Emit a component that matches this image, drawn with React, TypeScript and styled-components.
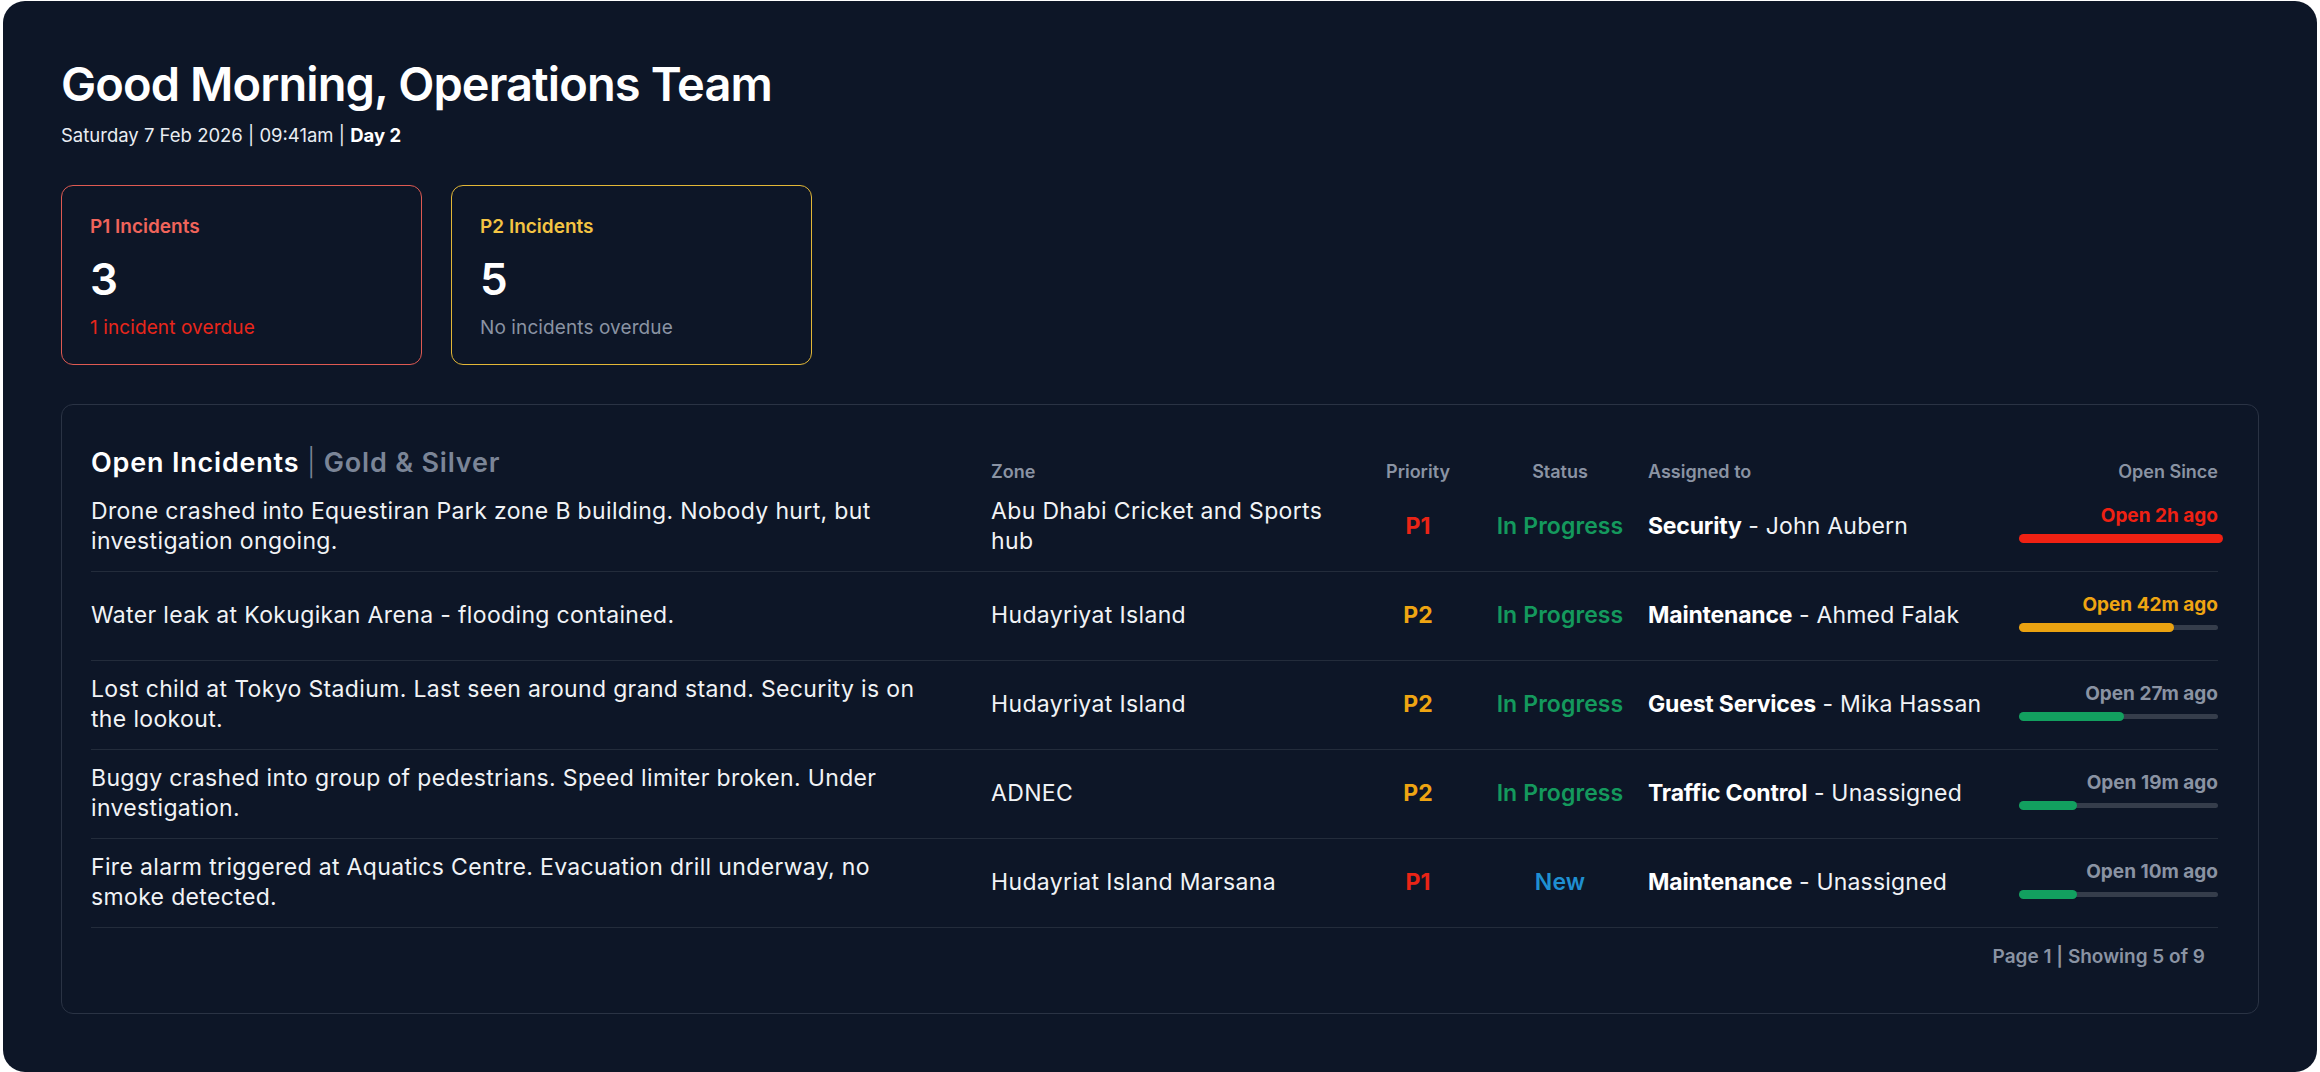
import styled, { createGlobalStyle } from "styled-components";

const GlobalStyle = createGlobalStyle`
  html, body {
    margin: 0;
    padding: 0;
    background: #ffffff;
  }
  body {
    font-family: Inter, "Noto Sans", "Liberation Sans", sans-serif;
    -webkit-font-smoothing: antialiased;
  }
  * {
    box-sizing: border-box;
  }
`;

const Page = styled.div`
  padding: 1px 3px 2px 3px;
`;

const Board = styled.main`
  background: #0d1627;
  border-radius: 22px;
  min-height: 1069px;
  padding: 55px 58px 58px 58px;
  color: #f3f5f8;
`;

const Title = styled.h1`
  margin: 0;
  font-size: 47px;
  line-height: 1.2;
  font-weight: 600;
  letter-spacing: -0.9px;
  color: #ffffff;
`;

const Subtitle = styled.p`
  margin: 11px 0 0;
  font-size: 18.5px;
  line-height: 1.3;
  font-weight: 400;
  color: #e9edf2;

  strong {
    font-weight: 700;
    color: #ffffff;
  }
`;

const Summary = styled.section`
  display: flex;
  gap: 29px;
  margin-top: 38px;
`;

const StatCard = styled.div<{ $accent: string }>`
  width: 361px;
  height: 180px;
  border: 1.5px solid ${(p) => p.$accent};
  border-radius: 12px;
  padding: 29px 28px 0 28px;
  display: flex;
  flex-direction: column;
`;

const StatLabel = styled.div<{ $color: string }>`
  font-size: 19px;
  line-height: 1.3;
  font-weight: 600;
  color: ${(p) => p.$color};
`;

const StatValue = styled.div`
  margin-top: 13px;
  font-size: 44px;
  line-height: 1.2;
  font-weight: 600;
  color: #ffffff;
`;

const StatNote = styled.div<{ $color: string }>`
  margin-top: 10px;
  font-size: 19px;
  line-height: 1.3;
  letter-spacing: 0.1px;
  color: ${(p) => p.$color};
`;

const Panel = styled.section`
  margin-top: 39px;
  border: 1px solid #2a3344;
  border-radius: 12px;
  padding: 42px 40px 43px 29px;
`;

const columns = "900px 370px 114px 170px 1fr 199px";

const HeadRow = styled.div`
  display: grid;
  grid-template-columns: ${columns};
  align-items: end;
  padding-bottom: 3px;
`;

const PanelTitle = styled.h2`
  margin: 0;
  font-size: 27px;
  line-height: 1.2;
  font-weight: 600;
  letter-spacing: 0.8px;
  color: #ffffff;

  span {
    color: #7b8597;
  }
  i {
    font-style: normal;
    font-weight: 300;
    color: #7b8597;
  }
`;

const HeadCell = styled.div<{ $align?: "left" | "center" | "right"; $indent?: boolean }>`
  font-size: 18px;
  line-height: 1.3;
  font-weight: 600;
  color: #8a93a3;
  margin-bottom: -4px;
  text-align: ${(p) => p.$align ?? "left"};
  padding-left: ${(p) => (p.$indent ? "3px" : "0")};
`;

const Row = styled.div`
  display: grid;
  grid-template-columns: ${columns};
  align-items: center;
  height: 89px;
  border-bottom: 1px solid #232c3b;
  font-size: 23px;
  line-height: 1.29;
  letter-spacing: 0.35px;
  color: #f1f3f6;
`;

const Desc = styled.div`
  padding-right: 60px;
`;

const Zone = styled.div`
  padding-right: 20px;
`;

const priorityColors: Record<string, string> = {
  P1: "#ea2416",
  P2: "#efa512",
};

const Priority = styled.div<{ $level: string }>`
  text-align: center;
  font-weight: 700;
  letter-spacing: 0;
  color: ${(p) => priorityColors[p.$level]};
`;

const statusColors: Record<string, string> = {
  "In Progress": "#14995d",
  New: "#1f8fd1",
};

const Status = styled.div<{ $status: string }>`
  text-align: center;
  font-weight: 600;
  letter-spacing: 0.1px;
  color: ${(p) => statusColors[p.$status]};
`;

const Assigned = styled.div`
  padding-left: 3px;
  white-space: nowrap;
  letter-spacing: 0.2px;

  b {
    font-weight: 700;
    letter-spacing: -0.2px;
    color: #ffffff;
  }
`;

const OpenSince = styled.div`
  display: flex;
  flex-direction: column;
  align-items: stretch;
  gap: 7px;
  margin-top: -8px;
  letter-spacing: 0;
`;

const OpenLabel = styled.div<{ $color: string }>`
  text-align: right;
  font-size: 19px;
  line-height: 1.3;
  font-weight: 700;
  color: ${(p) => p.$color};
`;

const Track = styled.div`
  height: 5px;
  border-radius: 3px;
  background: #353d4b;
  display: flex;
  align-items: center;
`;

const Fill = styled.div<{ $color: string }>`
  flex: none;
  height: 9px;
  border-radius: 5px;
  background: ${(p) => p.$color};
`;

const Footer = styled.div`
  margin-top: 17px;
  padding-right: 13px;
  text-align: right;
  font-size: 19px;
  line-height: 1.3;
  font-weight: 600;
  color: #8a93a3;
`;

type Incident = {
  desc: string;
  zone: string;
  priority: "P1" | "P2";
  status: "In Progress" | "New";
  team: string;
  person: string;
  since: string;
  sinceColor: string;
  barColor: string;
  progress: string;
};

const incidents: Incident[] = [
  {
    desc: "Drone crashed into Equestiran Park zone B building. Nobody hurt, but investigation ongoing.",
    zone: "Abu Dhabi Cricket and Sports hub",
    priority: "P1",
    status: "In Progress",
    team: "Security",
    person: "John Aubern",
    since: "Open 2h ago",
    sinceColor: "#ef2113",
    barColor: "#ef2113",
    progress: "calc(100% + 5px)",
  },
  {
    desc: "Water leak at Kokugikan Arena - flooding contained.",
    zone: "Hudayriyat Island",
    priority: "P2",
    status: "In Progress",
    team: "Maintenance",
    person: "Ahmed Falak",
    since: "Open 42m ago",
    sinceColor: "#efa512",
    barColor: "#eaa211",
    progress: "78%",
  },
  {
    desc: "Lost child at Tokyo Stadium. Last seen around grand stand. Security is on the lookout.",
    zone: "Hudayriyat Island",
    priority: "P2",
    status: "In Progress",
    team: "Guest Services",
    person: "Mika Hassan",
    since: "Open 27m ago",
    sinceColor: "#8a93a3",
    barColor: "#12a05f",
    progress: "53%",
  },
  {
    desc: "Buggy crashed into group of pedestrians. Speed limiter broken. Under investigation.",
    zone: "ADNEC",
    priority: "P2",
    status: "In Progress",
    team: "Traffic Control",
    person: "Unassigned",
    since: "Open 19m ago",
    sinceColor: "#8a93a3",
    barColor: "#12a05f",
    progress: "29%",
  },
  {
    desc: "Fire alarm triggered at Aquatics Centre. Evacuation drill underway, no smoke detected.",
    zone: "Hudayriat Island Marsana",
    priority: "P1",
    status: "New",
    team: "Maintenance",
    person: "Unassigned",
    since: "Open 10m ago",
    sinceColor: "#8a93a3",
    barColor: "#12a05f",
    progress: "29%",
  },
];

export default function App() {
  return (
    <Page>
      <GlobalStyle />
      <Board>
        <Title>Good Morning, Operations Team</Title>
        <Subtitle>
          Saturday 7 Feb 2026 | 09:41am | <strong>Day 2</strong>
        </Subtitle>

        <Summary>
          <StatCard $accent="#de5a52">
            <StatLabel $color="#f0645b">P1 Incidents</StatLabel>
            <StatValue>3</StatValue>
            <StatNote $color="#e8261b">1 incident overdue</StatNote>
          </StatCard>
          <StatCard $accent="#e2b737">
            <StatLabel $color="#f4c443">P2 Incidents</StatLabel>
            <StatValue>5</StatValue>
            <StatNote $color="#8a93a3">No incidents overdue</StatNote>
          </StatCard>
        </Summary>

        <Panel>
          <HeadRow>
            <PanelTitle>
              Open Incidents <i>|</i> <span>Gold &amp; Silver</span>
            </PanelTitle>
            <HeadCell>Zone</HeadCell>
            <HeadCell $align="center">Priority</HeadCell>
            <HeadCell $align="center">Status</HeadCell>
            <HeadCell $indent>Assigned to</HeadCell>
            <HeadCell $align="right">Open Since</HeadCell>
          </HeadRow>

          {incidents.map((it) => (
            <Row key={it.desc}>
              <Desc>{it.desc}</Desc>
              <Zone>{it.zone}</Zone>
              <Priority $level={it.priority}>{it.priority}</Priority>
              <Status $status={it.status}>{it.status}</Status>
              <Assigned>
                <b>{it.team}</b> - {it.person}
              </Assigned>
              <OpenSince>
                <OpenLabel $color={it.sinceColor}>{it.since}</OpenLabel>
                <Track>
                  <Fill $color={it.barColor} style={{ width: it.progress }} />
                </Track>
              </OpenSince>
            </Row>
          ))}

          <Footer>Page 1 | Showing 5 of 9</Footer>
        </Panel>
      </Board>
    </Page>
  );
}
